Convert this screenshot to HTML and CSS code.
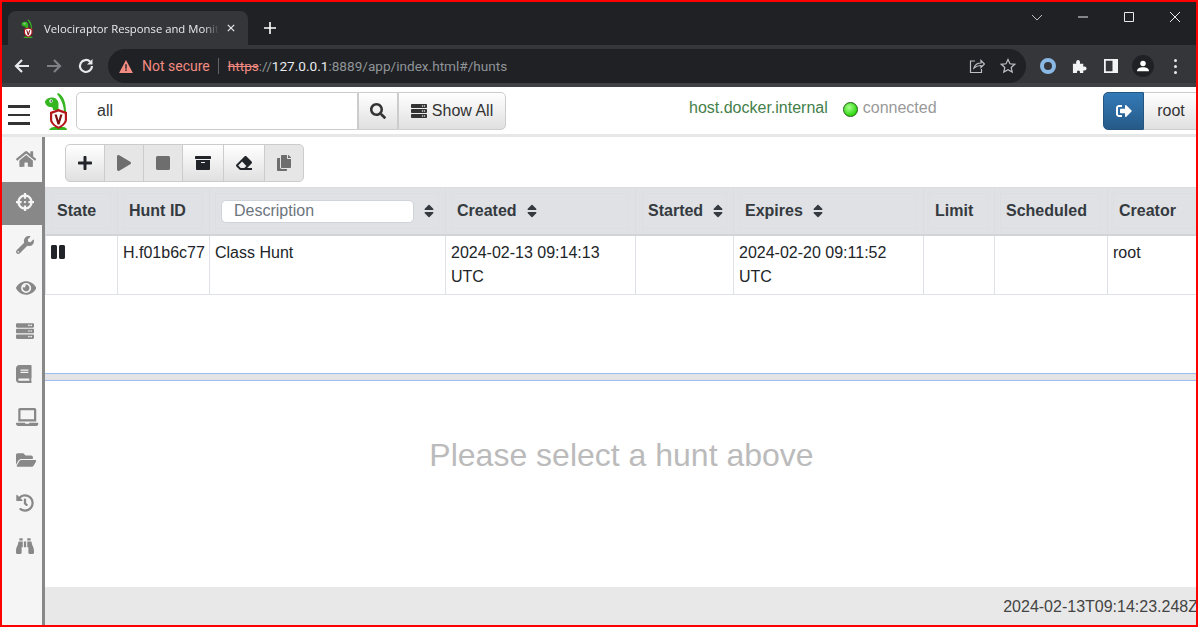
FILE: index.html
```html
<!DOCTYPE html>
<html lang="en">
<head>
  <meta charset="UTF-8">
  <meta name="viewport" content="width=device-width, initial-scale=1.0">
  <title>Velociraptor Response and Monitoring</title>
  <link rel="stylesheet" href="styles.css">
</head>
<body>

  <!-- icon sprite -->
  <svg class="sprite" xmlns="http://www.w3.org/2000/svg">
    <symbol id="i-search" viewBox="0 0 512 512"><path d="M505 442.7L405.3 343c-4.5-4.5-10.6-7-17-7H372c27.6-35.3 44-79.7 44-128C416 93.1 322.9 0 208 0S0 93.1 0 208s93.1 208 208 208c48.3 0 92.7-16.4 128-44v16.3c0 6.4 2.5 12.5 7 17l99.7 99.7c9.4 9.4 24.6 9.4 33.9 0l28.3-28.3c9.4-9.4 9.4-24.6.1-34zM208 336c-70.7 0-128-57.2-128-128 0-70.7 57.2-128 128-128 70.7 0 128 57.2 128 128 0 70.7-57.2 128-128 128z"/></symbol>
    <symbol id="i-server" viewBox="0 0 512 512"><path d="M480 160H32c-17.673 0-32-14.327-32-32V64c0-17.673 14.327-32 32-32h448c17.673 0 32 14.327 32 32v64c0 17.673-14.327 32-32 32zm-48-88c-13.255 0-24 10.745-24 24s10.745 24 24 24 24-10.745 24-24-10.745-24-24-24zm-64 0c-13.255 0-24 10.745-24 24s10.745 24 24 24 24-10.745 24-24-10.745-24-24-24zm112 248H32c-17.673 0-32-14.327-32-32v-64c0-17.673 14.327-32 32-32h448c17.673 0 32 14.327 32 32v64c0 17.673-14.327 32-32 32zm-48-88c-13.255 0-24 10.745-24 24s10.745 24 24 24 24-10.745 24-24-10.745-24-24-24zm-64 0c-13.255 0-24 10.745-24 24s10.745 24 24 24 24-10.745 24-24-10.745-24-24-24zm112 248H32c-17.673 0-32-14.327-32-32v-64c0-17.673 14.327-32 32-32h448c17.673 0 32 14.327 32 32v64c0 17.673-14.327 32-32 32zm-48-88c-13.255 0-24 10.745-24 24s10.745 24 24 24 24-10.745 24-24-10.745-24-24-24zm-64 0c-13.255 0-24 10.745-24 24s10.745 24 24 24 24-10.745 24-24-10.745-24-24-24z"/></symbol>
    <symbol id="i-signout" viewBox="0 0 512 512"><path d="M497 273L329 441c-15 15-41 4.5-41-17v-96H152c-13.3 0-24-10.7-24-24v-96c0-13.3 10.7-24 24-24h136V88c0-21.4 25.9-32 41-17l168 168c9.3 9.4 9.3 24.6 0 34zM192 436v-40c0-6.6-5.4-12-12-12H96c-17.7 0-32-14.3-32-32V160c0-17.7 14.3-32 32-32h84c6.6 0 12-5.4 12-12V76c0-6.6-5.4-12-12-12H96c-53 0-96 43-96 96v192c0 53 43 96 96 96h84c6.6 0 12-5.4 12-12z"/></symbol>
    <symbol id="i-plus" viewBox="0 0 448 512"><path d="M416 208H272V64c0-17.67-14.33-32-32-32h-32c-17.67 0-32 14.33-32 32v144H32c-17.67 0-32 14.33-32 32v32c0 17.67 14.33 32 32 32h144v144c0 17.67 14.33 32 32 32h32c17.67 0 32-14.33 32-32V304h144c17.67 0 32-14.33 32-32v-32c0-17.67-14.33-32-32-32z"/></symbol>
    <symbol id="i-play" viewBox="0 0 448 512"><path d="M424.4 214.7L72.4 6.6C43.8-10.3 0 6.1 0 47.9V464c0 37.5 40.7 60.1 72.4 41.3l352-208c31.4-18.5 31.5-64.1 0-82.6z"/></symbol>
    <symbol id="i-stop" viewBox="0 0 448 512"><path d="M400 32H48C21.5 32 0 53.5 0 80v352c0 26.5 21.5 48 48 48h352c26.5 0 48-21.5 48-48V80c0-26.5-21.5-48-48-48z"/></symbol>
    <symbol id="i-pause" viewBox="0 0 448 512"><path d="M144 479H48c-26.5 0-48-21.5-48-48V79c0-26.5 21.5-48 48-48h96c26.5 0 48 21.5 48 48v352c0 26.5-21.5 48-48 48zm304-48V79c0-26.5-21.5-48-48-48h-96c-26.5 0-48 21.5-48 48v352c0 26.5 21.5 48 48 48h96c26.5 0 48-21.5 48-48z"/></symbol>
    <symbol id="i-archive" viewBox="0 0 512 512"><path d="M32 448c0 17.7 14.3 32 32 32h384c17.7 0 32-14.3 32-32V160H32v288zm160-212c0-6.6 5.4-12 12-12h104c6.6 0 12 5.4 12 12v8c0 6.6-5.4 12-12 12H204c-6.6 0-12-5.4-12-12v-8zM480 32H32C14.3 32 0 46.3 0 64v48c0 8.8 7.2 16 16 16h480c8.8 0 16-7.2 16-16V64c0-17.7-14.3-32-32-32z"/></symbol>
    <symbol id="i-eraser" viewBox="0 0 512 512"><path d="M497.941 273.941c18.745-18.745 18.745-49.137 0-67.882l-160-160c-18.745-18.745-49.136-18.746-67.883 0l-256 256c-18.745 18.745-18.745 49.137 0 67.882l96 96A48.004 48.004 0 0 0 144 480h356c6.627 0 12-5.373 12-12v-40c0-6.627-5.373-12-12-12H355.883l142.058-142.059zm-302.627-62.627l137.373 137.373L265.373 416H150.628l-80-80 124.686-124.686z"/></symbol>
    <symbol id="i-copy" viewBox="0 0 448 512"><path d="M320 448v40c0 13.255-10.745 24-24 24H24c-13.255 0-24-10.745-24-24V120c0-13.255 10.745-24 24-24h72v296c0 30.879 25.121 56 56 56h168zm0-344V0H152c-13.255 0-24 10.745-24 24v368c0 13.255 10.745 24 24 24h272c13.255 0 24-10.745 24-24V128H344c-13.2 0-24-10.8-24-24zm120.971-31.029L375.029 7.029A24 24 0 0 0 358.059 0H352v96h96v-6.059a24 24 0 0 0-7.029-16.97z"/></symbol>
    <symbol id="i-sort" viewBox="0 0 320 512"><path d="M41 288h238c21.4 0 32.1 25.9 17 41L177 448c-9.4 9.4-24.6 9.4-33.9 0L24 329c-15.1-15.1-4.4-41 17-41zm255-105L177 64c-9.4-9.4-24.6-9.4-33.9 0L24 183c-15.1 15.1-4.4 41 17 41h238c21.4 0 32.1-25.9 17-41z"/></symbol>
    <symbol id="i-home" viewBox="0 0 576 512"><path d="M280.37 148.26L96 300.11V464a16 16 0 0 0 16 16l112.06-.29a16 16 0 0 0 15.92-16V368a16 16 0 0 1 16-16h64a16 16 0 0 1 16 16v95.64a16 16 0 0 0 16 16.05L464 480a16 16 0 0 0 16-16V300L295.67 148.26a12.19 12.19 0 0 0-15.3 0zM571.6 251.47L488 182.56V44.05a12 12 0 0 0-12-12h-56a12 12 0 0 0-12 12v72.61L318.47 43a48 48 0 0 0-61 0L4.34 251.47a12 12 0 0 0-1.6 16.9l25.5 31A12 12 0 0 0 45.15 301l235.22-193.74a12.19 12.19 0 0 1 15.3 0L530.9 301a12 12 0 0 0 16.9-1.6l25.5-31a12 12 0 0 0-1.7-16.93z"/></symbol>
    <symbol id="i-crosshairs" viewBox="0 0 512 512"><path d="M500 224h-30.364C455.724 130.325 381.675 56.276 288 42.364V12c0-6.627-5.373-12-12-12h-40c-6.627 0-12 5.373-12 12v30.364C130.325 56.276 56.276 130.325 42.364 224H12c-6.627 0-12 5.373-12 12v40c0 6.627 5.373 12 12 12h30.364C56.276 381.675 130.325 455.724 224 469.636V500c0 6.627 5.373 12 12 12h40c6.627 0 12-5.373 12-12v-30.364C381.675 455.724 455.724 381.675 469.636 288H500c6.627 0 12-5.373 12-12v-40c0-6.627-5.373-12-12-12zM288 404.634V364c0-6.627-5.373-12-12-12h-40c-6.627 0-12 5.373-12 12v40.634C165.826 392.232 119.783 346.243 107.366 288H148c6.627 0 12-5.373 12-12v-40c0-6.627-5.373-12-12-12h-40.634C119.768 165.826 165.757 119.783 224 107.366V148c0 6.627 5.373 12 12 12h40c6.627 0 12-5.373 12-12v-40.634C346.174 119.768 392.217 165.757 404.634 224H364c-6.627 0-12 5.373-12 12v40c0 6.627 5.373 12 12 12h40.634C392.232 346.174 346.243 392.217 288 404.634zM288 256c0 17.673-14.327 32-32 32s-32-14.327-32-32c0-17.673 14.327-32 32-32s32 14.327 32 32z"/></symbol>
    <symbol id="i-wrench" viewBox="0 0 512 512"><path d="M507.73 109.1c-2.24-9.03-13.54-12.09-20.12-5.51l-74.36 74.36-67.88-11.31-11.31-67.88 74.36-74.36c6.62-6.62 3.43-17.9-5.66-20.16-47.38-11.74-99.55.91-136.58 37.93-39.64 39.64-50.55 97.1-34.05 147.2L18.74 402.76c-24.99 24.99-24.99 65.51 0 90.5 24.99 24.99 65.51 24.99 90.5 0l213.21-213.21c50.12 16.71 107.47 5.68 147.37-34.22 37.07-37.07 49.7-89.32 37.91-136.73zM64 472c-13.25 0-24-10.75-24-24 0-13.26 10.75-24 24-24s24 10.74 24 24c0 13.25-10.75 24-24 24z"/></symbol>
    <symbol id="i-eye" viewBox="0 0 576 512"><path d="M572.52 241.4C518.29 135.59 410.93 64 288 64S57.68 135.64 3.48 241.41a32.35 32.35 0 0 0 0 29.19C57.71 376.41 165.07 448 288 448s230.32-71.64 284.52-177.41a32.35 32.35 0 0 0 0-29.19zM288 400a144 144 0 1 1 144-144 143.93 143.93 0 0 1-144 144zm0-240a95.31 95.31 0 0 0-25.31 3.79 47.85 47.85 0 0 1-66.9 66.9A95.78 95.78 0 1 0 288 160z"/></symbol>
    <symbol id="i-book" viewBox="0 0 448 512"><path d="M448 360V24c0-13.3-10.7-24-24-24H96C43 0 0 43 0 96v320c0 53 43 96 96 96h328c13.3 0 24-10.7 24-24v-16c0-7.5-3.5-14.3-8.9-18.7-4.2-15.4-4.2-59.3 0-74.7 5.4-4.3 8.9-11.1 8.9-18.6zM128 134c0-3.3 2.7-6 6-6h212c3.3 0 6 2.7 6 6v20c0 3.3-2.7 6-6 6H134c-3.3 0-6-2.7-6-6v-20zm0 64c0-3.3 2.7-6 6-6h212c3.3 0 6 2.7 6 6v20c0 3.3-2.7 6-6 6H134c-3.3 0-6-2.7-6-6v-20zm253.4 250H96c-17.7 0-32-14.3-32-32 0-17.6 14.4-32 32-32h285.4c-1.9 17.1-1.9 46.9 0 64z"/></symbol>
    <symbol id="i-laptop" viewBox="0 0 640 512"><path d="M624 416H381.54c-.74 19.81-14.71 32-32.74 32H288c-18.69 0-33.02-17.47-32.77-32H16c-8.8 0-16 7.2-16 16v16c0 35.2 28.8 64 64 64h512c35.2 0 64-28.8 64-64v-16c0-8.8-7.2-16-16-16zM576 48c0-26.4-21.6-48-48-48H112C85.6 0 64 21.6 64 48v336h512V48zm-64 272H128V64h384v256z"/></symbol>
    <symbol id="i-folder" viewBox="0 0 576 512"><path d="M572.694 292.093L500.27 416.248A63.997 63.997 0 0 1 444.989 448H45.025c-18.523 0-30.064-20.093-20.731-36.093l72.424-124.155A64 64 0 0 1 152 256h399.964c18.523 0 30.064 20.093 20.73 36.093zM152 224h328v-48c0-26.51-21.49-48-48-48H272l-64-64H48C21.49 64 0 85.49 0 112v278.046l69.077-118.418C86.214 242.25 117.989 224 152 224z"/></symbol>
    <symbol id="i-history" viewBox="0 0 512 512"><path d="M504 255.531c.253 136.64-111.18 248.372-247.82 248.468-59.015.042-113.223-20.53-155.822-54.911-11.077-8.94-11.905-25.541-1.839-35.607l11.267-11.267c8.609-8.609 22.353-9.551 31.891-1.984C173.062 425.135 212.781 440 256 440c101.705 0 184-82.311 184-184 0-101.705-82.311-184-184-184-48.814 0-93.149 18.969-126.068 49.932l50.754 50.754c10.08 10.08 2.941 27.314-11.313 27.314H24c-8.837 0-16-7.163-16-16V38.627c0-14.254 17.234-21.393 27.314-11.314l49.372 49.372C129.209 34.136 189.552 8 256 8c136.81 0 247.747 110.78 248 247.531zm-180.912 78.784l9.823-12.63c8.138-10.463 6.253-25.542-4.21-33.679L288 256.349V152c0-13.255-10.745-24-24-24h-16c-13.255 0-24 10.745-24 24v135.651l65.409 50.874c10.463 8.137 25.541 6.253 33.679-4.21z"/></symbol>
    <symbol id="i-binoculars" viewBox="0 0 512 512"><path d="M416 48c0-8.84-7.16-16-16-16h-64c-8.84 0-16 7.16-16 16v48h96V48zM63.91 159.99C61.4 253.84 3.46 274.22 0 404v44c0 17.67 14.33 32 32 32h96c17.67 0 32-14.33 32-32V288h32V128H95.84c-17.63 0-31.45 14.37-31.93 31.99zm384.18 0c-.48-17.62-14.3-31.99-31.93-31.99H320v160h32v160c0 17.67 14.33 32 32 32h96c17.67 0 32-14.33 32-32v-44c-3.46-129.78-61.4-150.16-63.91-244.01zM176 32h-64c-8.84 0-16 7.16-16 16v48h96V48c0-8.84-7.16-16-16-16zm48 256h64V128h-64v160z"/></symbol>
    <symbol id="i-logo" viewBox="0 0 24 38">
      <path d="M14 1c5 2 8 9 8 19l-2 1c0-8-3-14-7-19z" fill="#35b51f"/>
      <path d="M1 9.500c1-3 5-4.500 8-4 3 .5 5.500 3 5.500 6.500 0 2-.5 4 .5 6H9c0-2-.5-3-2-3-3 0-6-2-6-5.500z" fill="#35b51f"/>
      <circle cx="7" cy="9" r="1.700" fill="#fff"/>
      <circle cx="7.300" cy="9" r=".8" fill="#123"/>
      <path d="M5 38c1-2 3-3 5-3h9c2 0 4 1 4 3z" fill="#35b51f"/>
      <path d="M14.500 17l8.500 3v7.500c0 4-4 7-8.500 9.500C10 34.500 6 31.500 6 27.500V20z" fill="#b3161b"/>
      <path d="M14.500 19.500l6.300 2.200v5.800c0 3-2.800 5.300-6.300 7.300-3.500-2-6.300-4.300-6.300-7.300v-5.800z" fill="#fff"/>
      <path d="M10.500 22.500h2.300l1.700 6 1.700-6h2.300l-3 10h-2z" fill="#7d1114"/>
    </symbol>
  </svg>

  <div class="frame">

    <div class="tabbar">
      <div class="tab">
        <svg class="tab-icon"><use href="#i-logo"/></svg>
        <span class="tab-title">Velociraptor Response and Monit</span>
        <svg class="tab-close" viewBox="0 0 10 10"><path d="M1 1l8 8M9 1l-8 8"/></svg>
      </div>
      <svg class="new-tab" viewBox="0 0 12 12"><path d="M6 0v12M0 6h12"/></svg>
      <div class="window-btns">
        <svg class="win-chevron" viewBox="0 0 12 7"><path d="M1 1l5 5 5-5"/></svg>
        <span class="win-btn"><svg viewBox="0 0 10 10"><path d="M0 5h10"/></svg></span>
        <span class="win-btn"><svg viewBox="0 0 10 10"><path d="M.5.5h9v9h-9z"/></svg></span>
        <span class="win-btn"><svg viewBox="0 0 10 10"><path d="M0 0l10 10M10 0L0 10"/></svg></span>
      </div>
    </div>

    <div class="toolbar">
      <svg class="tb-btn" viewBox="0 0 18 18"><path d="M16 9H3M9 3L3 9l6 6"/></svg>
      <svg class="tb-btn dim" viewBox="0 0 18 18"><path d="M2 9h13M9 3l6 6-6 6"/></svg>
      <svg class="tb-btn" viewBox="0 0 18 18"><path d="M15 9a6 6 0 1 1-1.800-4.300"/><path class="solid" d="M15.500 2v5.500H10z"/></svg>
      <div class="omnibox">
        <svg class="warn" viewBox="0 0 16 15"><path d="M8 0l8 15H0z"/><path class="warn-mark" d="M7.200 5h1.600v5H7.200zM7.200 11h1.600v1.700H7.200z"/></svg>
        <span class="not-secure">Not secure</span>
        <span class="url"><s class="scheme">https</s><span class="url-dim">://</span><span class="url-host">127.0.0.1</span><span class="url-dim">:8889/app/index.html#/hunts</span></span>
        <svg class="omni-icon share" viewBox="0 0 16 16"><path d="M6 3H1.500v11.500h11V11"/><path d="M5 10c1-3.500 3.500-5 7-5V2.500L15.500 6 12 9.500V7.500c-3 0-5 .8-7 2.500z"/></svg>
        <svg class="omni-icon" viewBox="0 0 16 16"><path d="M8 1.500l2 4.300 4.700.5-3.500 3.200 1 4.600L8 11.800l-4.200 2.300 1-4.600L1.300 6.300 6 5.800z"/></svg>
      </div>
      <span class="ext-ring"></span>
      <svg class="ext-puzzle" viewBox="0 0 16 16"><path d="M1 5h3.500C4 2.500 5 1 6.500 1S9 2.500 8.500 5H12v3.200c2.300-.5 3.500.5 3.500 2s-1.200 2.500-3.500 2V15H8.500c.4-1.800-.5-2.700-1.700-2.700S5 13.200 5.300 15H1z"/></svg>
      <svg class="side-panel" viewBox="0 0 14 14"><path fill-rule="evenodd" d="M0 0h14v14H0zM1.800 1.800v10.400H8.500V1.800z"/></svg>
      <span class="avatar"><svg viewBox="0 0 14 14"><circle cx="7" cy="4" r="3.200"/><path d="M0 13c0-3 3-4.500 7-4.500s7 1.500 7 4.500z"/></svg></span>
      <span class="menu-dots"><i></i><i></i><i></i></span>
    </div>

    <div class="app-nav">
      <button class="hamburger" type="button"><i></i><i></i><i></i></button>
      <svg class="logo"><use href="#i-logo"/></svg>
      <div class="search-group">
        <input class="search-input" type="text" value="all">
        <button class="grad-btn search-btn" type="button"><svg class="icon"><use href="#i-search"/></svg></button>
        <button class="grad-btn show-all" type="button"><svg class="icon"><use href="#i-server"/></svg>Show All</button>
      </div>
      <span class="host-name">host.docker.internal</span>
      <span class="status-dot"></span>
      <span class="status-text">connected</span>
      <div class="user-group">
        <button class="logout-btn" type="button"><svg class="icon"><use href="#i-signout"/></svg></button>
        <button class="grad-btn user-btn" type="button">root</button>
      </div>
    </div>
    <div class="nav-rule"></div>

    <div class="app-body">
      <nav class="sidebar">
        <a class="side-item"><svg class="side-icon w-576"><use href="#i-home"/></svg></a>
        <a class="side-item active"><svg class="side-icon"><use href="#i-crosshairs"/></svg></a>
        <a class="side-item"><svg class="side-icon"><use href="#i-wrench"/></svg></a>
        <a class="side-item"><svg class="side-icon w-576"><use href="#i-eye"/></svg></a>
        <a class="side-item"><svg class="side-icon"><use href="#i-server"/></svg></a>
        <a class="side-item"><svg class="side-icon w-448"><use href="#i-book"/></svg></a>
        <a class="side-item"><svg class="side-icon w-640"><use href="#i-laptop"/></svg></a>
        <a class="side-item"><svg class="side-icon w-576"><use href="#i-folder"/></svg></a>
        <a class="side-item"><svg class="side-icon"><use href="#i-history"/></svg></a>
        <a class="side-item"><svg class="side-icon"><use href="#i-binoculars"/></svg></a>
      </nav>

      <main class="main">
        <div class="hunt-toolbar">
          <div class="btn-group">
            <button class="grad-btn tool" type="button"><svg class="icon"><use href="#i-plus"/></svg></button>
            <button class="grad-btn tool off" type="button"><svg class="icon"><use href="#i-play"/></svg></button>
            <button class="grad-btn tool off" type="button"><svg class="icon"><use href="#i-stop"/></svg></button>
            <button class="grad-btn tool" type="button"><svg class="icon"><use href="#i-archive"/></svg></button>
            <button class="grad-btn tool" type="button"><svg class="icon"><use href="#i-eraser"/></svg></button>
            <button class="grad-btn tool off" type="button"><svg class="icon"><use href="#i-copy"/></svg></button>
          </div>
        </div>

        <div class="table-pane">
          <table class="hunts">
            <colgroup>
              <col class="c-state"><col class="c-id"><col class="c-desc"><col class="c-date"><col class="c-started"><col class="c-date"><col class="c-limit"><col class="c-sched"><col class="c-creator">
            </colgroup>
            <thead>
              <tr>
                <th><div class="th-box">State</div></th>
                <th><div class="th-box">Hunt ID</div></th>
                <th><div class="th-box"><input class="desc-filter" type="text" placeholder="Description"><svg class="sort"><use href="#i-sort"/></svg></div></th>
                <th><div class="th-box">Created<svg class="sort"><use href="#i-sort"/></svg></div></th>
                <th class="th-started"><div class="th-box">Started<svg class="sort"><use href="#i-sort"/></svg></div></th>
                <th><div class="th-box">Expires<svg class="sort"><use href="#i-sort"/></svg></div></th>
                <th><div class="th-box">Limit</div></th>
                <th><div class="th-box">Scheduled</div></th>
                <th><div class="th-box">Creator</div></th>
              </tr>
            </thead>
            <tbody>
              <tr>
                <td><svg class="icon pause"><use href="#i-pause"/></svg></td>
                <td>H.f01b6c77</td>
                <td>Class Hunt</td>
                <td>2024-02-13 09:14:13 UTC</td>
                <td></td>
                <td>2024-02-20 09:11:52 UTC</td>
                <td></td>
                <td></td>
                <td>root</td>
              </tr>
            </tbody>
          </table>
        </div>

        <div class="splitter"></div>

        <div class="detail-pane">Please select a hunt above</div>

        <footer class="status-bar"><span class="clock">2024-02-13T09:14:23.248Z</span></footer>
      </main>
    </div>
  </div>

</body>
</html>
```

FILE: styles.css
```css
* {
  box-sizing: border-box;
}

html, body {
  margin: 0;
  padding: 0;
}

body {
  font-family: "Liberation Sans", Arial, sans-serif;
  font-size: 16px;
  color: #212529;
}

.sprite {
  display: none;
}

.frame {
  width: 1198px;
  height: 627px;
  border: 2px solid #ff0000;
  display: flex;
  flex-direction: column;
  overflow: hidden;
  background: #fff;
}

/* Browser tab strip */
.tabbar {
  height: 43px;
  flex: none;
  background: #202124;
  display: flex;
  align-items: flex-end;
  padding-left: 6px;
}

.tab {
  width: 240px;
  height: 34px;
  background: #35363a;
  border-radius: 8px 8px 0 0;
  display: flex;
  align-items: center;
  padding: 0 9px 0 11px;
  color: #e8eaed;
}

.tab-icon {
  width: 16px;
  height: 19px;
  flex: none;
  margin-right: 9px;
}

.tab-title {
  font-family: "Open Sans", sans-serif;
  font-size: 11.3px;
  white-space: nowrap;
  width: 175px;
  flex: none;
  -webkit-mask-image: linear-gradient(to right, #000 160px, transparent 175px);
  mask-image: linear-gradient(to right, #000 160px, transparent 175px);
}

.tab-close {
  width: 8px;
  height: 8px;
  margin-left: 8px;
  stroke: #e8eaed;
  stroke-width: 1.5;
  fill: none;
}

.new-tab {
  width: 12px;
  height: 12px;
  margin: 0 0 11px 16px;
  stroke: #fff;
  stroke-width: 1.6;
  fill: none;
}

.window-btns {
  margin-left: auto;
  margin-right: -2px;
  align-self: stretch;
  display: flex;
  align-items: flex-start;
}

.win-chevron {
  width: 12px;
  height: 7px;
  margin: 12px 17px 0 0;
  stroke: #bdc1c6;
  stroke-width: 1;
  fill: none;
}

.win-btn {
  width: 46px;
  height: 30px;
  display: flex;
  justify-content: center;
  padding-top: 10px;
}

.win-btn svg {
  width: 10px;
  height: 10px;
  stroke: #e8eaed;
  stroke-width: 1;
  fill: none;
}

/* Browser address row */
.toolbar {
  height: 42px;
  flex: none;
  background: #35363a;
  border-bottom: 4px solid #3f4043;
  display: flex;
  align-items: center;
  padding: 4px 0 0 11px;
}

.tb-btn {
  width: 18px;
  height: 18px;
  margin-right: 14px;
  stroke: #e8eaed;
  stroke-width: 2.2;
  fill: none;
  flex: none;
}

.tb-btn.dim {
  stroke: #7e8084;
}

.tb-btn .solid {
  fill: #e8eaed;
  stroke: none;
}

.omnibox {
  width: 918px;
  height: 34px;
  margin-left: -1px;
  background: #202124;
  border-radius: 17px;
  display: flex;
  align-items: center;
  padding-left: 11px;
  font-family: Roboto, sans-serif;
  font-size: 14px;
  flex: none;
}

.warn {
  width: 14px;
  height: 13px;
  fill: #f28b82;
}

.warn .warn-mark {
  fill: #202124;
}

.not-secure {
  color: #f28b82;
  margin-left: 9px;
  padding-right: 8px;
  border-right: 1px solid #5f6368;
  line-height: 16px;
}

.url {
  margin-left: 9px;
  font-size: 13.6px;
  color: #8f9499;
}

.scheme {
  color: #f28b82;
}

.url-host {
  color: #e8eaed;
}

.omni-icon {
  width: 16px;
  height: 16px;
  margin-left: 15px;
  stroke: #bdc1c6;
  stroke-width: 1.2;
  fill: none;
}

.omni-icon.share {
  margin-left: auto;
}

.omni-icon:last-child {
  margin-right: 10px;
}

.ext-ring {
  width: 16px;
  height: 16px;
  border: 4px solid #8ab9e6;
  border-radius: 50%;
  margin-left: 14px;
  flex: none;
}

.ext-puzzle {
  width: 15px;
  height: 15px;
  margin-left: 16px;
  fill: #f1f3f4;
  flex: none;
}

.side-panel {
  width: 14px;
  height: 14px;
  margin-left: 17px;
  fill: #f1f3f4;
  flex: none;
}

.avatar {
  width: 22px;
  height: 22px;
  margin-left: 14px;
  border-radius: 50%;
  background: #202124;
  display: flex;
  align-items: center;
  justify-content: center;
  flex: none;
}

.avatar svg {
  width: 12px;
  height: 12px;
  fill: #fff;
}

.menu-dots {
  margin-left: 20px;
  display: flex;
  flex-direction: column;
  gap: 3px;
}

.menu-dots i {
  width: 3px;
  height: 3px;
  border-radius: 50%;
  background: #e8eaed;
}

/* Velociraptor nav bar */
.app-nav {
  height: 47px;
  flex: none;
  display: flex;
  align-items: flex-start;
  padding-top: 5px;
  background: #fff;
}

.nav-rule {
  height: 3px;
  flex: none;
  background: #e7e7e7;
}

.hamburger {
  width: 22px;
  margin: 13px 0 0 6px;
  padding: 0;
  border: 0;
  background: none;
  display: flex;
  flex-direction: column;
  gap: 6px;
}

.hamburger i {
  height: 2.500px;
  background: #333;
}

.logo {
  width: 24px;
  height: 38px;
  margin-left: 14px;
}

.icon {
  width: 16px;
  height: 16px;
  fill: currentColor;
  flex: none;
}

.search-group {
  display: flex;
  margin-left: 8px;
}

.search-input {
  width: 282px;
  height: 38px;
  padding: 0 20px;
  border: 1px solid #ccc;
  border-radius: 5px 0 0 5px;
  font: inherit;
  color: #333;
  outline: none;
}

.grad-btn {
  background: linear-gradient(to bottom, #ffffff, #e0e0e0);
  border: 1px solid #ccc;
  color: #333;
  font: inherit;
  height: 38px;
  padding: 0;
  display: flex;
  align-items: center;
  justify-content: center;
}

.search-btn {
  width: 40px;
}

.show-all {
  width: 108px;
  gap: 5px;
  border-radius: 0 5px 5px 0;
}

.host-name {
  margin: 7px 0 0 183px;
  color: #45804a;
}

.status-dot {
  width: 15px;
  height: 15px;
  margin: 10px 0 0 15px;
  border-radius: 50%;
  border: 1px solid #1e5c12;
  background: radial-gradient(circle at 40% 35%, #a8ff8e, #2fd80f 70%);
}

.status-text {
  margin: 7px 0 0 5px;
  color: #999;
}

.user-group {
  margin-left: auto;
  display: flex;
}

.logout-btn {
  width: 41px;
  height: 38px;
  padding: 0;
  border: 1px solid #245580;
  border-radius: 5px 0 0 5px;
  background: linear-gradient(to bottom, #337ab7, #265a88);
  color: #fff;
  display: flex;
  align-items: center;
  justify-content: center;
}

.user-btn {
  width: 52px;
  padding-left: 2px;
  border-right: 0;
  border-left: 0;
}

/* Page body */
.app-body {
  flex: 1;
  min-height: 0;
  display: flex;
}

.sidebar {
  width: 43px;
  flex: none;
  padding-top: 2px;
  background: #f5f5f5;
  border-right: 3px solid #888;
}

.side-item {
  height: 43px;
  display: flex;
  align-items: center;
  padding: 0 0 3px 14px;
  color: #888;
}

.side-item.active {
  background: #888;
  color: #f5f5f5;
}

.side-icon {
  width: 18px;
  height: 18px;
  fill: currentColor;
  flex: none;
}

.side-icon.w-448 { width: 15.75px; }
.side-icon.w-576 { width: 20.25px; }
.side-icon.w-640 { width: 22.5px; }

.main {
  flex: 1;
  min-width: 0;
  display: flex;
  flex-direction: column;
}

.hunt-toolbar {
  height: 50px;
  flex: none;
  padding: 7px 0 0 20px;
}

.btn-group {
  display: flex;
}

.tool {
  width: 40px;
  height: 38px;
  margin-right: -1px;
  color: #212529;
}

.tool:first-child {
  border-radius: 5px 0 0 5px;
}

.tool:last-child {
  border-radius: 0 5px 5px 0;
}

.tool:nth-child(4),
.tool:nth-child(5) {
  width: 42px;
}

.tool.off {
  color: #6e6e6e;
  background: #e6e6e6;
}

.table-pane {
  height: 186px;
  flex: none;
  overflow: hidden;
}

.hunts {
  table-layout: fixed;
  width: 1162px;
  border-collapse: collapse;
}

.c-state { width: 72px; }
.c-id { width: 92px; }
.c-desc { width: 236px; }
.c-date { width: 190px; }
.c-started { width: 98px; }
.c-limit { width: 71px; }
.c-sched { width: 113px; }
.c-creator { width: 100px; }

.hunts th {
  height: 47px;
  padding: 5px 6px 4px 5px;
  background: #e0e1e4;
  border-top: 1px solid #dcdde0;
  border-bottom: 2px solid #d3d4d8;
  border-left: 1px solid #dcdde0;
  text-align: left;
  color: #343a40;
}

.hunts th.th-started {
  padding-left: 6px;
}

.th-box {
  height: 36px;
  padding: 0 5px;
  display: flex;
  align-items: center;
  border: 1px solid #dddee1;
  white-space: nowrap;
}

.sort {
  width: 10px;
  height: 16px;
  margin-left: 10px;
  fill: #343a40;
  flex: none;
}

.desc-filter {
  width: 193px;
  height: 23px;
  padding: 0 12px;
  border: 1px solid #ced4da;
  border-radius: 5px;
  font: inherit;
  font-weight: normal;
  background: #fff;
  outline: none;
}

.desc-filter::placeholder {
  color: #6c757d;
}

.hunts td {
  height: 59px;
  padding: 5px;
  border: 1px solid #dee2e6;
  border-top: 0;
  line-height: 24px;
  vertical-align: top;
}

.pause {
  display: block;
  width: 14px;
  height: 16px;
  margin-top: 3px;
}

.splitter {
  height: 8px;
  flex: none;
  background: #e4e4e6;
  border-top: 1px solid #9dbcf0;
  border-bottom: 1px solid #9dbcf0;
}

.detail-pane {
  flex: 1;
  min-height: 0;
  padding: 55px 0 0 2px;
  text-align: center;
  font-size: 32px;
  line-height: 38px;
  color: #bbbbbb;
}

.status-bar {
  height: 38px;
  flex: none;
  background: #e8e8e8;
  display: flex;
  justify-content: flex-end;
  align-items: center;
  padding-top: 2px;
  color: #444;
}

.clock {
  white-space: nowrap;
  margin-right: -2px;
}
```
